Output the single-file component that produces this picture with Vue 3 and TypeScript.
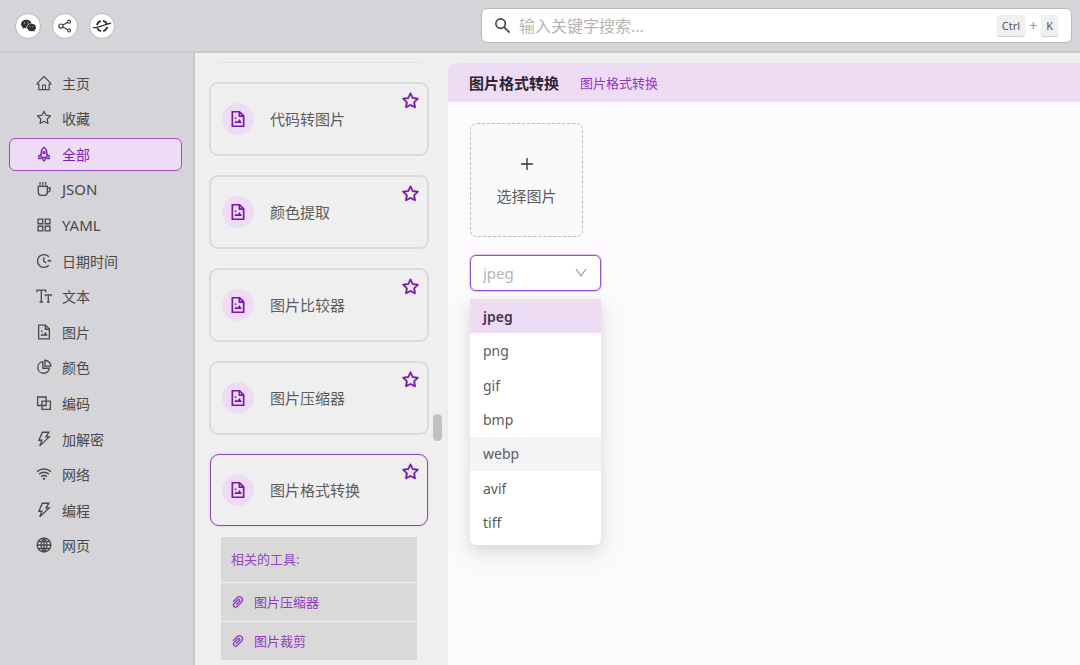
<script setup lang="ts">
import { ref } from 'vue'

type Icon = { paths?: string[]; fills?: string[] }

const starFill =
  'M908.1 353.1l-253.9-36.9L540.7 86.1c-3.1-6.3-8.2-11.4-14.5-14.5-15.8-7.8-35-1.3-42.9 14.5L369.8 316.2l-253.9 36.9c-7 1-13.4 4.3-18.3 9.3a32.05 32.05 0 00.6 45.3l183.7 179.1-43.4 252.9a31.95 31.95 0 0046.4 33.7L512 754l227.1 119.4c6.2 3.3 13.4 4.4 20.3 3.2 17.4-3 29.1-19.5 26.1-36.9l-43.4-252.9 183.7-179.1c5-4.9 8.3-11.3 9.3-18.3 2.7-17.5-9.5-33.7-27-36.3zM664.8 561.6l36.1 210.3L512 672.7 323.1 772l36.1-210.3-152.8-149L417.6 382 512 190.7 606.4 382l211.2 30.7-152.8 148.9z'

const icons: Record<string, Icon> = {
  home: {
    fills: [
      'M946.5 505L534.6 93.4a31.93 31.93 0 00-45.2 0L77.5 505c-12 12-18.8 28.3-18.8 45.3 0 35.3 28.7 64 64 64h43.4V908c0 17.7 14.3 32 32 32h627.8c17.7 0 32-14.3 32-32V614.3h43.4c17 0 33.3-6.7 45.3-18.8 24.9-25 24.9-65.5-.1-90.5zM568 868H456V664h112v204zm217.9-325.7V868H632V640c0-22.1-17.9-40-40-40H432c-22.1 0-40 17.9-40 40v228H238.1V542.3h-96l370-369.7 370 369.7h-96.2z',
    ],
  },
  star: { fills: [starFill] },
  rocket: {
    paths: [
      'M512 110C390 210 340 330 340 450V720H684V450C684 330 634 210 512 110Z',
      'M340 530L200 640V790H340M684 530L824 640V790H684',
      'M420 730C420 830 450 880 512 930C574 880 604 830 604 730',
      'M512 370a62 62 0 1 0 1 0Z',
    ],
  },
  coffee: {
    paths: [
      'M170 345H710V690C710 800 640 890 550 890H330C240 890 170 800 170 690Z',
      'M710 450H880V560C880 640 820 690 710 700',
      'M275 90V250M440 90V250M605 90V250',
    ],
  },
  grid: {
    paths: ['M158 158H436V436H158Z', 'M588 158H866V436H588Z', 'M158 588H436V866H158Z', 'M588 588H866V866H588Z'],
  },
  clock: {
    paths: ['M800 260A385 385 0 1 0 800 764', 'M500 285V535L640 635', 'M720 512H950', 'M835 430L835 512'],
  },
  text: {
    paths: ['M90 280V160H610V280M350 160V870M245 870H455', 'M600 530V440H940V530M770 440V870M690 870H850'],
  },
  image: {
    paths: ['M190 100H600L834 334V924H190Z', 'M590 100V345H834'],
    fills: ['M300 740L400 600L480 670L600 510L735 740Z', 'M330 420h90v90h-90Z'],
  },
  pie: {
    paths: ['M440 190A350 350 0 1 0 835 585H440Z', 'M565 105V460H920C920 265 760 105 565 105Z'],
  },
  blocks: {
    paths: ['M130 150H640V660H130Z', 'M390 400H894V894H390Z'],
  },
  bolt: {
    paths: ['M410 105H805L635 385H825L255 925L385 585H205Z'],
  },
  wifi: {
    paths: ['M85 370Q512 60 939 370', 'M210 520Q512 290 814 520', 'M335 670Q512 535 689 670'],
    fills: ['M512 725a72 72 0 1 0 1 0Z'],
  },
  globe: {
    paths: [
      'M512 105A407 407 0 1 0 513 105Z',
      'M512 105C270 340 270 684 512 919C754 684 754 340 512 105Z',
      'M105 512H919M512 105V919M180 310H844M180 714H844',
    ],
  },
  clip: {
    fills: [
      'M779.3 196.6c-94.2-94.2-247.6-94.2-341.7 0l-261 260.8c-1.7 1.7-2.6 4-2.6 6.4s.9 4.7 2.6 6.4l36.9 36.9a9 9 0 0012.7 0l261-260.8c32.4-32.4 75.5-50.2 121.3-50.2s88.9 17.8 121.2 50.2c32.4 32.4 50.2 75.5 50.2 121.2 0 45.8-17.8 88.8-50.2 121.2l-266 265.9-43.1 43.1c-40.3 40.3-105.8 40.3-146.1 0-19.5-19.5-30.2-45.4-30.2-73s10.7-53.5 30.2-73l263.9-263.8c6.7-6.6 15.5-10.3 24.9-10.3h.1c9.4 0 18.1 3.7 24.7 10.3 6.7 6.7 10.3 15.5 10.3 24.9 0 9.3-3.7 18.1-10.3 24.7L372.4 653c-1.7 1.7-2.6 4-2.6 6.4s.9 4.7 2.6 6.4l36.9 36.9a9 9 0 0012.7 0l215.6-215.6c19.9-19.9 30.8-46.3 30.8-74.4s-11-54.6-30.8-74.4c-41.1-41.1-107.9-41-149 0L463 364 224.8 602.1A172.22 172.22 0 00174 724.8c0 46.3 18.1 89.8 50.8 122.5 33.9 33.8 78.3 50.7 122.7 50.7 44.4 0 88.8-16.9 122.6-50.7l309.2-309C824.8 492.7 850 432 850 367.5c.1-64.6-25.1-125.3-70.7-170.9z',
    ],
  },
}

const menu = [
  { icon: 'home', label: '主页' },
  { icon: 'star', label: '收藏' },
  { icon: 'rocket', label: '全部' },
  { icon: 'coffee', label: 'JSON', latin: true },
  { icon: 'grid', label: 'YAML', latin: true },
  { icon: 'clock', label: '日期时间' },
  { icon: 'text', label: '文本' },
  { icon: 'image', label: '图片' },
  { icon: 'pie', label: '颜色' },
  { icon: 'blocks', label: '编码' },
  { icon: 'bolt', label: '加解密' },
  { icon: 'wifi', label: '网络' },
  { icon: 'bolt', label: '编程' },
  { icon: 'globe', label: '网页' },
]
const activeMenu = ref('全部')

const tools = ['代码转图片', '颜色提取', '图片比较器', '图片压缩器', '图片格式转换']
const activeTool = ref('图片格式转换')
const related = ['图片压缩器', '图片裁剪']

const formats = ['jpeg', 'png', 'gif', 'bmp', 'webp', 'avif', 'tiff']
const format = ref('jpeg')
const hovered = ref('webp')
const keyword = ref('')
</script>

<template>
  <div class="app">
    <header class="topbar">
      <div class="actions">
        <button class="round" type="button" aria-label="WeChat">
          <svg viewBox="0 0 24 24" width="17" height="17">
            <path fill="#333" d="M9 4C4.600 4 1.500 6.700 1.500 10.100c0 1.900 1 3.500 2.700 4.600l-.7 2.200 2.600-1.300c.9.300 1.900.4 2.900.4-.3-4.200 3-7 7.300-7C15.700 6 12.800 4 9 4Z" />
            <path fill="#333" d="M16.300 9.700c-3.600 0-6.300 2.300-6.300 5.200s2.700 5.200 6.300 5.200c.8 0 1.600-.1 2.300-.4l2.200 1.200-.6-1.900c1.500-1 2.400-2.400 2.400-4.100 0-2.900-2.700-5.200-6.300-5.200Z" />
            <g fill="#aaa">
              <circle cx="6.500" cy="8.500" r="1" /><circle cx="11.500" cy="8.500" r="1" />
              <circle cx="14.300" cy="13.500" r=".8" /><circle cx="18.300" cy="13.500" r=".8" />
            </g>
          </svg>
        </button>
        <button class="round" type="button" aria-label="Share">
          <svg viewBox="0 0 24 24" width="14" height="14" fill="none" stroke="#444" stroke-width="2">
            <circle cx="5" cy="12" r="3.500" /><circle cx="19" cy="4.500" r="2.500" /><circle cx="19" cy="19.500" r="2.500" />
            <path d="M8.300 10.300L16.700 5.800M8.300 13.700l8.400 4.600" />
          </svg>
        </button>
        <button class="round" type="button" aria-label="Planet">
          <svg viewBox="0 0 24 24" width="20" height="20" fill="none" stroke="#333">
            <path stroke-width="2.200" d="M6 11A6.200 6.200 0 0 1 10.500 6M13 5.800A6.200 6.200 0 0 1 18 10M18.200 13A6.200 6.200 0 0 1 13.500 18M11 18.100A6.200 6.200 0 0 1 6.200 14.500" />
            <path stroke-width="1.600" d="M1 14C8 14.500 16 9.500 23 8.500" />
          </svg>
        </button>
      </div>
      <label class="search">
        <svg viewBox="0 0 18 18" width="17" height="17" fill="none" stroke="#444" stroke-width="1.700">
          <circle cx="7" cy="7" r="5" /><path d="M10.700 10.700L16.500 16.500" />
        </svg>
        <input v-model="keyword" type="text" placeholder="输入关键字搜索..." aria-label="搜索" />
        <kbd>Ctrl</kbd><span class="plus">+</span><kbd>K</kbd>
      </label>
    </header>

    <div class="body">
      <nav class="sidebar">
        <ul>
          <li v-for="m in menu" :key="m.label">
            <a href="#" :class="{ active: m.label === activeMenu, latin: m.latin }" @click.prevent="activeMenu = m.label">
              <svg class="icon" viewBox="32 32 960 960" width="16" height="16">
                <path v-for="d in icons[m.icon].paths" :key="d" class="line" :d="d" />
                <path v-for="d in icons[m.icon].fills" :key="d" class="fill" :d="d" />
              </svg>
              <span>{{ m.label }}</span>
            </a>
          </li>
        </ul>
      </nav>

      <section class="tools">
        <div class="rule"></div>
        <article v-for="t in tools" :key="t" class="card" :class="{ active: t === activeTool }" @click="activeTool = t">
          <span class="badge">
            <svg class="icon bold" viewBox="0 0 1024 1024" width="18" height="18">
              <path v-for="d in icons.image.paths" :key="d" class="line" :d="d" />
              <path v-for="d in icons.image.fills" :key="d" class="fill" :d="d" />
            </svg>
          </span>
          <span class="name">{{ t }}</span>
          <button class="fav" type="button" :aria-label="'收藏 ' + t">
            <svg viewBox="64 32 896 896" width="17" height="17"><path :d="starFill" /></svg>
          </button>
        </article>
        <div class="related">
          <h3>相关的工具:</h3>
          <a v-for="r in related" :key="r" href="#" @click.prevent>
            <svg viewBox="112 112 800 800" width="12" height="12"><path v-for="d in icons.clip.fills" :key="d" :d="d" /></svg>
            {{ r }}
          </a>
        </div>
        <span class="thumb"></span>
      </section>

      <main class="panel">
        <div class="panel-head">
          <h1>图片格式转换</h1>
          <a href="#" @click.prevent>图片格式转换</a>
        </div>
        <div class="content">
          <button class="upload" type="button">
            <svg viewBox="0 0 14 14" width="14" height="14"><path d="M7 1V13M1 7H13" fill="none" stroke="#333" stroke-width="1.300" /></svg>
            <span>选择图片</span>
          </button>
          <div class="picker">
            <select v-model="format" aria-label="图片格式">
              <option v-for="f in formats" :key="f" :value="f">{{ f }}</option>
            </select>
            <svg class="chevron" viewBox="0 0 12 12" width="12" height="12"><path d="M1 2L6 9L11 2" fill="none" stroke="#999" stroke-width="1.200" /></svg>
            <ul class="menu" role="listbox" aria-label="图片格式">
              <li
                v-for="f in formats"
                :key="f"
                role="option"
                :aria-selected="f === format"
                :class="{ selected: f === format, hover: f === hovered }"
                @mouseenter="hovered = f"
                @click="format = f"
              >
                {{ f }}
              </li>
            </ul>
          </div>
        </div>
      </main>
    </div>
  </div>
</template>

<style>
body {
  margin: 0;
  background: #efeff0;
}
</style>

<style scoped>
.app {
  display: flex;
  flex-direction: column;
  height: 100vh;
  overflow: hidden;
  font-family: 'Noto Sans', 'Noto Sans CJK SC', sans-serif;
  font-size: 15px;
  color: #5c5c5c;
}
.app * {
  box-sizing: border-box;
}
button {
  padding: 0;
  font: inherit;
  color: inherit;
  cursor: pointer;
}
a {
  text-decoration: none;
}
ul {
  margin: 0;
  padding: 0;
  list-style: none;
}
.topbar {
  display: flex;
  align-items: center;
  gap: 16px;
  flex: none;
  height: 53px;
  padding: 0 8px 0 15px;
  background: #d4d4d9;
  border-bottom: 2px solid #c9c9cc;
}
.actions {
  display: flex;
  flex: 1;
  gap: 11px;
}
.round {
  display: grid;
  place-items: center;
  width: 26px;
  height: 26px;
  border: 1px solid #b8b8ba;
  border-radius: 50%;
  background: #fff;
}
.search {
  display: flex;
  align-items: center;
  width: 56%;
  max-width: 591px;
  height: 35px;
  padding: 0 13px 0 12px;
  border: 1px solid #b9b9bc;
  border-radius: 6px;
  background: #fff;
}
.search svg {
  flex: none;
}
.search input {
  flex: 1;
  min-width: 0;
  padding: 0 8px;
  border: 0;
  outline: 0;
  background: none;
  font: inherit;
  font-size: 16px;
  color: #555;
}
.search input::placeholder {
  color: #b5b5b5;
  opacity: 1;
}
kbd {
  padding: 0 5px;
  border-radius: 3px;
  background: #f0f0f0;
  box-shadow: 0 1px 1px #ccc;
  font: inherit;
  font-size: 11px;
  line-height: 21px;
  color: #555;
}
.plus {
  padding: 0 4px;
  font-size: 14px;
  color: #999;
}
.body {
  display: flex;
  flex: 1;
  min-height: 0;
}
.sidebar {
  flex: none;
  width: 195px;
  padding: 14px 11px 0 9px;
  background: #d4d4d9;
  border-right: 2px solid #c9c9cb;
}
.sidebar ul {
  display: flex;
  flex-direction: column;
  justify-content: space-between;
  height: 496px;
}
.sidebar a {
  display: flex;
  align-items: center;
  gap: 10px;
  height: 33px;
  padding: 0 0 2px 26px;
  border: 1px solid transparent;
  border-radius: 6px;
  font-size: 14px;
  color: #4a4a4a;
}
.sidebar a.latin {
  font-size: 15px;
}
.sidebar a.active {
  border-color: #9b4dca;
  background: #eedcf6;
  color: #7d1fb0;
}
.icon .line {
  fill: none;
  stroke: currentColor;
  stroke-width: 80;
}
.icon .fill {
  fill: currentColor;
}
.icon.bold .line {
  stroke-width: 96;
}
.tools {
  position: relative;
  display: flex;
  flex-direction: column;
  gap: 19px;
  flex: none;
  width: 253px;
  padding: 9px 19px 6px 14px;
  background: #efeff0;
}
.rule {
  flex: none;
  height: 1px;
  margin: 0 8px;
  background: #e4e4e2;
}
.card {
  display: flex;
  align-items: center;
  flex: none;
  height: 74px;
  padding: 0 8px 0 11px;
  border: 2px solid #dadada;
  border-radius: 9px;
  cursor: pointer;
}
.card.active {
  height: 72px;
  margin: 0 1px;
  border: 1px solid #8a45ae;
  box-shadow: 0 0 3px #dcc5e8;
}
.badge {
  display: grid;
  place-items: center;
  width: 32px;
  height: 32px;
  border-radius: 50%;
  background: #eedcf6;
  color: #7a14ab;
}
.name {
  flex: 1;
  padding: 0 0 2px 16px;
}
.fav {
  align-self: flex-start;
  width: 17px;
  height: 17px;
  margin-top: 8px;
  border: 0;
  background: none;
  color: #7a14ab;
}
.fav svg {
  display: block;
  overflow: visible;
  fill: currentColor;
  stroke: currentColor;
  stroke-width: 24;
}
.related {
  flex: none;
  margin: -8px 12px 0;
  color: #9445c4;
  font-size: 13px;
}
.related h3 {
  margin: 0;
  padding-left: 10px;
  background: #d9d9d9;
  font-size: 13px;
  font-weight: 400;
  line-height: 45px;
}
.related a {
  display: flex;
  align-items: center;
  gap: 10px;
  height: 38px;
  margin-top: 1px;
  padding: 0 0 1px 11px;
  background: #d9d9d9;
  color: #9038c4;
}
.related svg {
  overflow: visible;
  fill: currentColor;
  stroke: currentColor;
  stroke-width: 24;
}
.thumb {
  position: absolute;
  top: 361px;
  right: 6px;
  width: 9px;
  height: 27px;
  border-radius: 5px;
  background: #c1c1c1;
}
.panel {
  display: flex;
  flex-direction: column;
  flex: 1;
  min-width: 0;
  padding-top: 10px;
}
.panel-head {
  display: flex;
  align-items: center;
  gap: 21px;
  flex: none;
  height: 39px;
  padding: 0 0 1px 21px;
  border-radius: 9px 0 0 0;
  background: #eedcf5;
}
.panel-head h1 {
  margin: 0;
  font-size: 15px;
  color: #2d2333;
}
.panel-head a {
  font-size: 13px;
  color: #9038c4;
}
.content {
  display: flex;
  flex-direction: column;
  align-items: flex-start;
  gap: 18px;
  flex: 1;
  padding: 21px 22px;
  background: #fcfafd;
}
.upload {
  display: flex;
  flex-direction: column;
  align-items: center;
  justify-content: center;
  gap: 14px;
  width: 113px;
  height: 114px;
  padding-top: 2px;
  border: 1px dashed #bbb;
  border-radius: 7px;
  background: #fafafa;
}
.picker {
  position: relative;
  width: 131px;
}
.picker select {
  display: block;
  width: 100%;
  height: 36px;
  padding: 0 12px;
  border: 1px solid #9b4dca;
  border-radius: 6px;
  outline: 0;
  appearance: none;
  background: #fff;
  box-shadow: 0 0 0 1px #e2c8ef;
  font: inherit;
  color: #b5b5b5;
}
.chevron {
  position: absolute;
  top: 12px;
  right: 14px;
  pointer-events: none;
}
.menu {
  position: absolute;
  top: 44px;
  left: 0;
  display: grid;
  grid-auto-rows: 1fr;
  width: 100%;
  height: 246px;
  padding-bottom: 5px;
  border-radius: 2px 2px 6px 6px;
  background: #fff;
  box-shadow: 0 6px 14px rgb(0 0 0 / 10%), 0 9px 28px 8px rgb(0 0 0 / 4%);
  font-size: 14px;
}
.menu li {
  display: flex;
  align-items: center;
  padding-left: 13px;
}
.menu .hover {
  background: #f4f4f5;
}
.menu .selected {
  background: #eedcf5;
  font-weight: 600;
  color: #44354c;
}
</style>
